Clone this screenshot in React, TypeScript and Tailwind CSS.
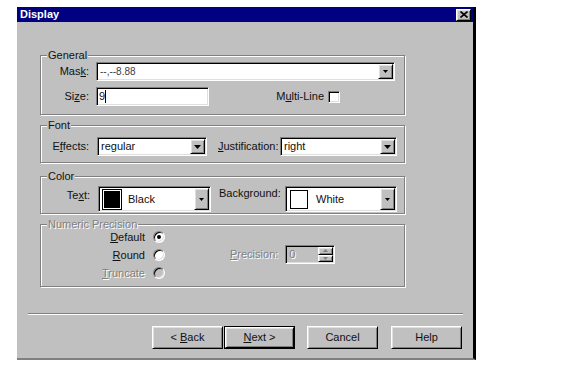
import React from "react";

const sunken =
  "border border-t-[#808080] border-l-[#808080] border-r-white border-b-white p-[1px] shadow-[inset_1px_1px_0_#000,inset_-1px_-1px_0_#dfdfdf]";
const raised =
  "border border-t-white border-l-white border-r-black border-b-black shadow-[inset_1px_1px_0_#dfdfdf,inset_-1px_-1px_0_#808080]";
const disabledText = "text-[#808080] [text-shadow:1px_1px_0_#fff]";

function U({ children, className = "" }: { children: React.ReactNode; className?: string }) {
  return <span className={`underline underline-offset-[1px] decoration-1 ${className}`}>{children}</span>;
}

function Arrow({ small }: { small?: boolean }) {
  return small ? (
    <svg width="5" height="3" viewBox="0 0 5 3">
      <path d="M0 0h5L2.5 3z" fill="#000" />
    </svg>
  ) : (
    <svg width="7" height="4" viewBox="0 0 7 4">
      <path d="M0 0h7L3.5 4z" fill="#000" />
    </svg>
  );
}

function DropBtn({ small }: { small?: boolean }) {
  return (
    <div className={`w-[15px] shrink-0 flex items-center justify-center bg-[#c0c0c0] ${raised}`}>
      <Arrow small={small} />
    </div>
  );
}

function Combo({
  className,
  children,
  small,
}: {
  className: string;
  children: React.ReactNode;
  small?: boolean;
}) {
  return (
    <div className={`flex bg-white ${sunken} ${className}`}>
      <div className="flex-1 flex items-center pl-[2px] overflow-hidden whitespace-nowrap">{children}</div>
      <DropBtn small={small} />
    </div>
  );
}

function Group({
  label,
  disabled,
  className,
  children,
}: {
  label: string;
  disabled?: boolean;
  className: string;
  children: React.ReactNode;
}) {
  return (
    <div
      className={`relative w-[365px] border border-[#808080] shadow-[inset_1px_1px_0_#fff,1px_1px_0_#fff] ${className}`}
    >
      <span
        className={`absolute -top-[7px] left-[6px] px-[1px] bg-[#c0c0c0] leading-[13px] ${disabled ? disabledText : ""}`}
      >
        {label}
      </span>
      {children}
    </div>
  );
}

function Radio({ checked, disabled }: { checked?: boolean; disabled?: boolean }) {
  return (
    <div
      className={`w-[12px] h-[12px] rounded-full flex items-center justify-center border border-t-[#808080] border-l-[#808080] border-r-white border-b-white shadow-[inset_1px_1px_0_#000,inset_-1px_-1px_0_#dfdfdf] ${disabled ? "bg-[#c0c0c0]" : "bg-white"}`}
    >
      {checked && <div className="w-[4px] h-[4px] rounded-full bg-black" />}
    </div>
  );
}

function Button({ children, def }: { children: React.ReactNode; def?: boolean }) {
  return (
    <div className={`w-[71px] h-[23px] ${def ? "border border-black" : ""}`}>
      <div className={`w-full h-full flex items-center justify-center bg-[#c0c0c0] whitespace-pre ${raised}`}>{children}</div>
    </div>
  );
}

export default function App() {
  return (
    <div className="w-[579px] h-[365px] bg-white pt-[7px] pl-[17px] font-['Liberation_Sans',Arial,sans-serif] text-[11px] leading-[13px] text-[#111]">
      <div className="w-[459px] h-[353px] flex flex-col bg-[#c0c0c0] border-r-[3px] border-r-black border-b-2 border-b-[#808080]">
        {/* Title bar */}
        <div className="h-[15px] shrink-0 bg-[#000080] flex items-center justify-between pl-[3px] pr-[2px]">
          <span className="text-white font-bold">Display</span>
          <div className={`w-[15px] h-[12px] flex items-center justify-center bg-[#c0c0c0] ${raised}`}>
            <svg width="8" height="7" viewBox="0 0 8 7">
              <path d="M0.5 0.5L7.5 6.5M7.5 0.5L0.5 6.5" stroke="#000" strokeWidth="1.6" />
            </svg>
          </div>
        </div>

        <div className="flex flex-col pl-[23px]">
          {/* General */}
          <Group label="General" className="mt-[33px] h-[60px] pt-[6px]">
            <div className="flex items-center h-[19px]">
              <span className="w-[48px] text-right">
                Mas<U>k</U>:
              </span>
              <Combo className="ml-[7px] w-[299px] h-[19px]" small>
                <span className="text-[#404040] text-[10px]">--,--8.88</span>
              </Combo>
            </div>
            <div className="flex items-center h-[19px] mt-[6px]">
              <span className="w-[48px] text-right">
                Si<U>z</U>e:
              </span>
              <div className={`ml-[7px] w-[113px] h-[19px] bg-white flex items-center pl-[2px] ${sunken}`}>
                <span>9</span>
                <span className="w-[1px] h-[13px] bg-black" />
              </div>
              <div className="ml-auto mr-[64px] flex items-center">
                <span>
                  M<U>u</U>lti-Line
                </span>
                <div className={`ml-[4px] w-[12px] h-[12px] bg-white ${sunken}`} />
              </div>
            </div>
          </Group>

          {/* Font */}
          <Group label="Font" className="mt-[10px] h-[38px] pt-[11px]">
            <div className="flex items-center h-[19px]">
              <span className="w-[48px] text-right">
                E<U>f</U>fects:
              </span>
              <Combo className="ml-[8px] w-[110px] h-[19px]">
                <span>regular</span>
              </Combo>
              <span className="ml-[11px] w-[60px]">
                <U>J</U>ustification:
              </span>
              <Combo className="ml-[2px] w-[117px] h-[19px]">
                <span>right</span>
              </Combo>
            </div>
          </Group>

          {/* Color */}
          <Group label="Color" className="mt-[13px] h-[38px] pt-[9px]">
            <div className="flex items-start h-[26px]">
              <span className="w-[49px] text-right mt-[3px]">
                Te<U>x</U>t:
              </span>
              <Combo className="ml-[8px] w-[113px] h-[26px]" small>
                <div className="w-[18px] h-[19px] bg-black border border-white outline outline-1 outline-black ml-[1px]" />
                <span className="ml-[7px]">Black</span>
              </Combo>
              <span className="ml-[8px] w-[63px] mt-[1px]">Background:</span>
              <Combo className="ml-[3px] w-[112px] h-[26px]" small>
                <div className="w-[18px] h-[19px] bg-white border border-black ml-[1px]" />
                <span className="ml-[8px]">White</span>
              </Combo>
            </div>
          </Group>

          {/* Numeric Precision */}
          <Group label="Numeric Precision" disabled className="mt-[10px] h-[63px] pt-[3px]">
            <div className="flex items-start">
              <div className="flex flex-col w-[124px]">
                <div className="flex items-center h-[18px]">
                  <span className="w-[104px] text-right">
                    <U>D</U>efault
                  </span>
                  <div className="ml-[8px]">
                    <Radio checked />
                  </div>
                </div>
                <div className="flex items-center h-[18px]">
                  <span className="w-[104px] text-right">
                    <U>R</U>ound
                  </span>
                  <div className="ml-[8px]">
                    <Radio />
                  </div>
                </div>
                <div className="flex items-center h-[18px]">
                  <span className={`w-[104px] text-right ${disabledText}`}>
                    <U>T</U>runcate
                  </span>
                  <div className="ml-[8px]">
                    <Radio disabled />
                  </div>
                </div>
              </div>
              <div className="flex items-center mt-[17px] ml-[65px]">
                <span className={disabledText}>
                  <U>P</U>recision:
                </span>
                <div className={`ml-[7px] w-[50px] h-[19px] flex bg-[#c0c0c0] ${sunken}`}>
                  <div className={`flex-1 flex items-center pl-[2px] ${disabledText}`}>0</div>
                  <div className="w-[15px] flex flex-col">
                    <div className={`flex-1 flex items-center justify-center bg-[#c0c0c0] ${raised}`}>
                      <svg width="5" height="3" viewBox="0 0 5 3">
                        <path d="M0 3h5L2.5 0z" fill="#808080" />
                      </svg>
                    </div>
                    <div className={`flex-1 flex items-center justify-center bg-[#c0c0c0] ${raised}`}>
                      <svg width="5" height="3" viewBox="0 0 5 3">
                        <path d="M0 0h5L2.5 3z" fill="#808080" />
                      </svg>
                    </div>
                  </div>
                </div>
              </div>
            </div>
          </Group>
        </div>

        {/* Separator */}
        <div className="mt-[26px] ml-[11px] w-[435px] h-[2px] border-t border-t-[#808080] border-b border-b-white" />

        {/* Buttons */}
        <div className="mt-[11px] pl-[135px] flex">
          <Button>
            {"< "}
            <U>B</U>
            {"ack"}
          </Button>
          <div className="ml-[1px]">
            <Button def>
              <U>N</U>
              {"ext >"}
            </Button>
          </div>
          <div className="ml-[12px]">
            <Button>Cancel</Button>
          </div>
          <div className="ml-[13px]">
            <Button>Help</Button>
          </div>
        </div>
      </div>
    </div>
  );
}
